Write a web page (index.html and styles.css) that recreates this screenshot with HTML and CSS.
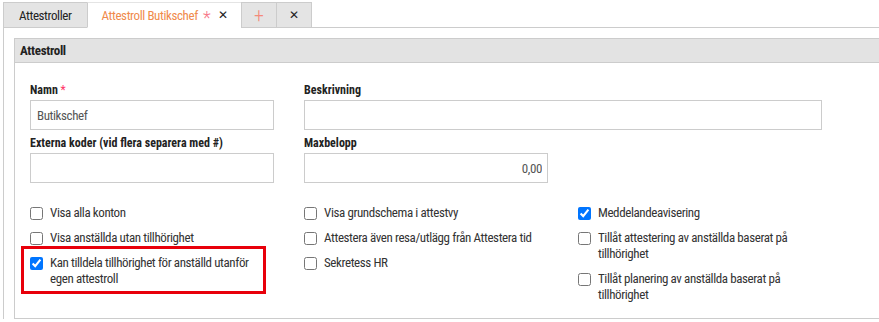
FILE: index.html
```html
<!DOCTYPE html>
<html lang="sv">
<head>
  <meta charset="UTF-8">
  <meta name="viewport" content="width=device-width, initial-scale=1.0">
  <title>Attestroll Butikschef</title>
  <link rel="stylesheet" href="styles.css">
</head>
<body>
  <div class="tabs">
    <div class="tab">Attestroller</div>
    <div class="tab tab-active"><span>Attestroll Butikschef</span><span class="dirty">*</span><span class="tab-close">&#x2715;</span></div>
    <div class="tab tab-icon tab-add">+</div>
    <div class="tab tab-icon">&#x2715;</div>
  </div>
  <div class="panel">
    <div class="box">
      <div class="box-header">Attestroll</div>
      <div class="form">
        <div class="fields">
          <div class="field">
            <label>Namn <span class="req">*</span></label>
            <input type="text" value="Butikschef">
          </div>
          <div class="field wide">
            <label>Beskrivning</label>
            <input type="text">
          </div>
          <div class="field">
            <label>Externa koder (vid flera separera med #)</label>
            <input type="text">
          </div>
          <div class="field">
            <label>Maxbelopp</label>
            <input type="text" class="num" value="0,00">
          </div>
        </div>
        <div class="checks">
          <div class="check-col">
            <label class="check"><input type="checkbox"><span>Visa alla konton</span></label>
            <label class="check"><input type="checkbox"><span>Visa anställda utan tillhörighet</span></label>
            <label class="check marked"><input type="checkbox" checked><span>Kan tilldela tillhörighet för anställd utanför egen attestroll</span><i class="highlight"></i></label>
          </div>
          <div class="check-col">
            <label class="check"><input type="checkbox"><span>Visa grundschema i attestvy</span></label>
            <label class="check"><input type="checkbox"><span>Attestera även resa/utlägg från Attestera tid</span></label>
            <label class="check"><input type="checkbox"><span>Sekretess HR</span></label>
          </div>
          <div class="check-col">
            <label class="check"><input type="checkbox" checked><span>Meddelandeavisering</span></label>
            <label class="check"><input type="checkbox"><span>Tillåt attestering av anställda baserat på tillhörighet</span></label>
            <label class="check"><input type="checkbox"><span>Tillåt planering av anställda baserat på tillhörighet</span></label>
          </div>
        </div>
      </div>
    </div>
  </div>
</body>
</html>
```

FILE: styles.css
```css
body {
  margin: 0;
  background: #fff;
  font-family: "Roboto Condensed", Roboto, sans-serif;
  font-size: 13px;
  letter-spacing: -0.4px;
  color: #333;
  overflow: hidden;
}
.tabs {
  display: flex;
  margin: 2px 0 0 3px;
  position: relative;
  z-index: 1;
}
.tab {
  box-sizing: border-box;
  height: 26px;
  padding: 0 15px;
  display: flex;
  align-items: center;
  background: #e4e4e4;
  border: 1px solid #ccc;
  margin-left: -1px;
  margin-bottom: -1px;
  color: #222;
}
.tab:first-child {
  margin-left: 0;
}
.tab-active {
  background: #fff;
  border-top-color: #e4e4e4;
  border-bottom-color: #fff;
  color: #f08a4b;
  padding: 0 13px 0 14px;
}
.dirty {
  color: #f7798a;
  font-size: 18px;
  font-weight: 300;
  line-height: 1;
  margin: 5px 0 0 5px;
}
.tab-close {
  color: #222;
  font-size: 12px;
  margin-left: 8px;
}
.tab-icon {
  width: 36px;
  justify-content: center;
  padding: 0;
  font-size: 12px;
}
.tab-add {
  color: #f58a7a;
  font-size: 20px;
  font-weight: 300;
}
.panel {
  margin-left: 3px;
  border-top: 1px solid #ccc;
  border-left: 1px solid #ccc;
  padding: 10px 0 0 10px;
}
.box {
  border: 1px solid #ccc;
  border-right: 0;
}
.box-header {
  background: #e3e3e3;
  border-bottom: 1px solid #ccc;
  height: 23px;
  line-height: 23px;
  padding-left: 5px;
  font-weight: bold;
  letter-spacing: -0.3px;
  color: #222;
}
.form {
  padding: 19px 0 15px 15px;
}
.fields {
  display: grid;
  grid-template-columns: 244px 244px 244px;
  column-gap: 30px;
  row-gap: 5px;
}
.field {
  display: flex;
  flex-direction: column;
}
.field.wide {
  grid-column: span 2;
}
.field label {
  font-size: 12px;
  font-weight: bold;
  letter-spacing: 0;
  color: #222;
  line-height: 16px;
  margin-bottom: 2px;
}
.req {
  color: #f36;
  font-weight: normal;
}
.field input {
  box-sizing: border-box;
  height: 30px;
  border: 1px solid #ccc;
  padding: 0 6px;
  font: inherit;
  letter-spacing: inherit;
  color: #555;
  outline: none;
}
.field input.num {
  text-align: right;
  padding-right: 5px;
}
.checks {
  display: grid;
  grid-template-columns: 244px 244px 244px;
  column-gap: 30px;
  margin-top: 22px;
}
.check-col {
  display: flex;
  flex-direction: column;
  gap: 9px;
}
.check {
  position: relative;
  display: flex;
  align-items: flex-start;
  gap: 7px;
  line-height: 16px;
  color: #333;
  width: 234px;
}
.check input {
  margin: 2px 0 0;
  width: 13px;
  height: 13px;
  flex: none;
}
.highlight {
  position: absolute;
  left: -9px;
  top: -9px;
  width: 245px;
  height: 48px;
  box-sizing: border-box;
  border: 3px solid #e8000b;
  pointer-events: none;
}
```
